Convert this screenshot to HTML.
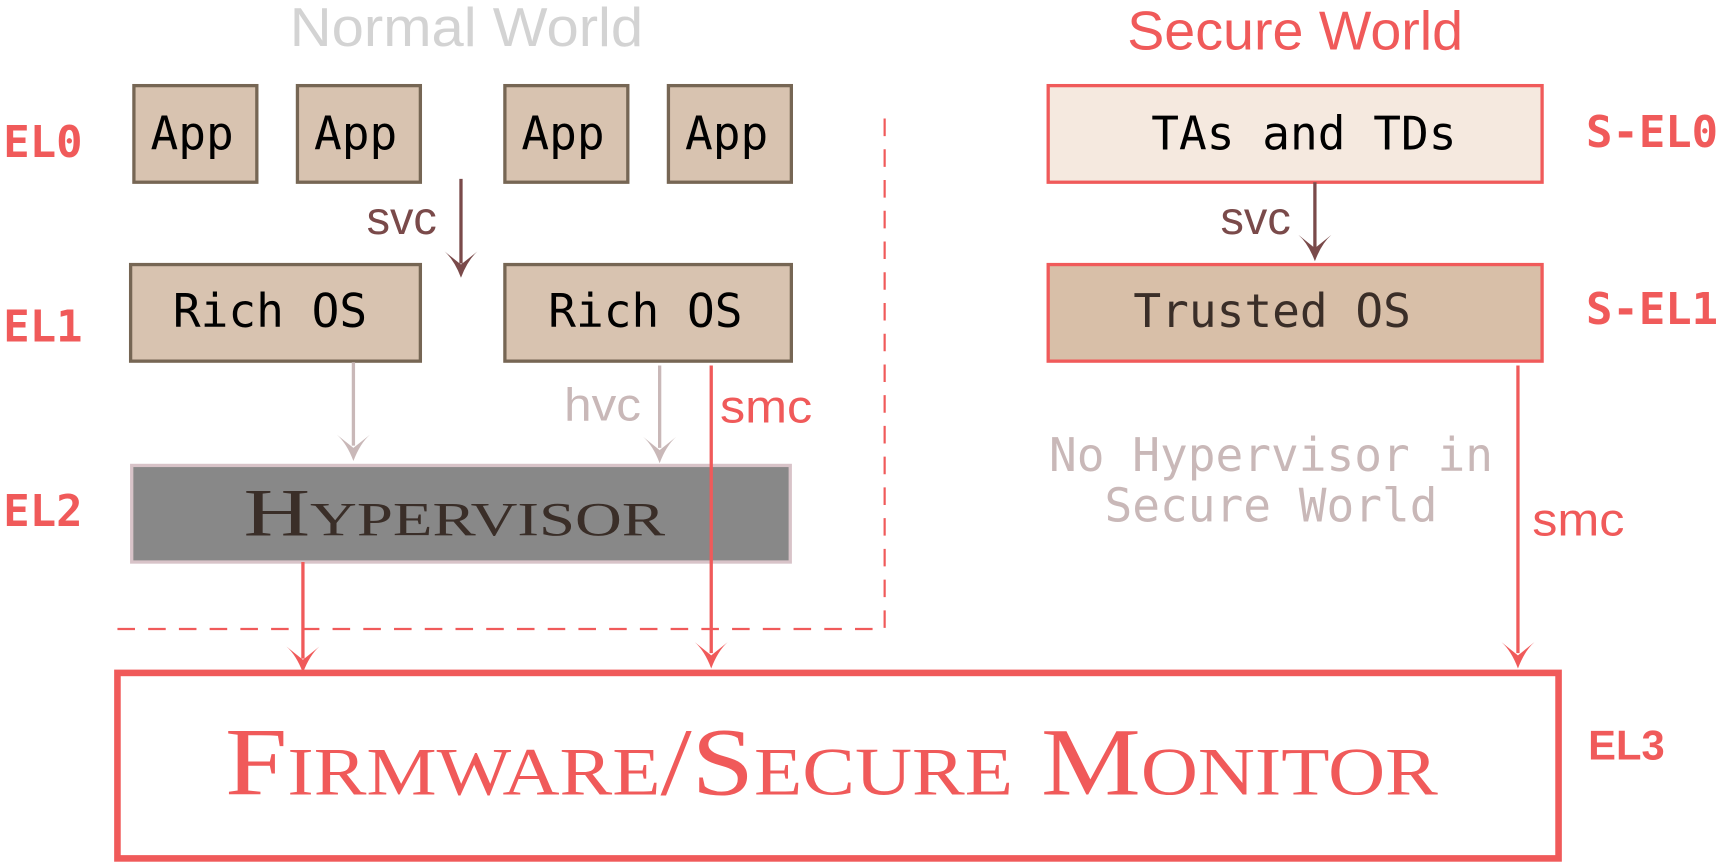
<!DOCTYPE html>
<html><head><style>html,body{margin:0;padding:0;background:#fff;}svg{display:block}</style></head>
<body>
<svg width="1721" height="865" viewBox="0 0 1568 788" preserveAspectRatio="none" xmlns="http://www.w3.org/2000/svg">
<defs>
<path id="ah" d="M-15 -24 Q-6 -16 0 0 Q6 -16 15 -24 L0 -12 Z"/>
</defs>
<g font-family="Liberation Sans, sans-serif" font-size="50" text-anchor="middle">
<text x="425" y="42" fill="#d3d3d3" textLength="322" lengthAdjust="spacingAndGlyphs">Normal World</text>
<text x="1180" y="45" fill="#f05a5a" textLength="306" lengthAdjust="spacingAndGlyphs">Secure World</text>
</g>
<g font-family="DejaVu Sans Mono, Liberation Mono, monospace" font-weight="bold" font-size="40" fill="#f05a5a">
<text x="3" y="143">EL0</text>
<text x="3" y="311">EL1</text>
<text x="3" y="479">EL2</text>
<text x="1445" y="134">S-EL0</text>
<text x="1445" y="295">S-EL1</text>
</g>
<text x="1447" y="692" font-family="Liberation Sans, sans-serif" font-weight="bold" font-size="38" fill="#f05a5a">EL3</text>
<g fill="#d8c3b0" stroke="#766654" stroke-width="3">
<rect x="122" y="78" width="112" height="88"/><rect x="271" y="78" width="112" height="88"/>
<rect x="460" y="78" width="112" height="88"/><rect x="609" y="78" width="112" height="88"/>
<rect x="119" y="241" width="264" height="88"/><rect x="460" y="241" width="261" height="88"/>
</g>
<g font-family="DejaVu Sans Mono, monospace" font-size="42" fill="#000" text-anchor="middle">
<text x="175" y="136">App</text><text x="324" y="136">App</text><text x="513" y="136">App</text><text x="662" y="136">App</text>
<text x="246" y="298">Rich OS</text><text x="588" y="298">Rich OS</text>
</g>
<rect x="955" y="78" width="450" height="88" fill="#f5e9df" stroke="#f05a5a" stroke-width="3"/>
<text x="1188" y="136" font-family="DejaVu Sans Mono, monospace" font-size="42" text-anchor="middle">TAs and TDs</text>
<rect x="955" y="241" width="450" height="88" fill="#d8bfa8" stroke="#f05a5a" stroke-width="3"/>
<text x="1159" y="298" font-family="DejaVu Sans Mono, monospace" font-size="42" text-anchor="middle" fill="#3a2e28">Trusted OS</text>
<rect x="120" y="424" width="600" height="88" fill="#888" stroke="#d8c3c8" stroke-width="3"/>
<text x="222" y="488" font-family="Liberation Serif, serif" font-size="62" font-variant="small-caps" fill="#3a2e28" textLength="384" lengthAdjust="spacingAndGlyphs">Hypervisor</text>
<rect x="107" y="613" width="1313" height="169" fill="#fff" stroke="#f05a5a" stroke-width="6"/>
<text x="205" y="724" font-family="Liberation Serif, serif" font-size="88" font-variant="small-caps" fill="#f05a5a" textLength="1105" lengthAdjust="spacingAndGlyphs">Firmware/Secure Monitor</text>
<path d="M806 108 V573 H97" fill="none" stroke="#f05a5a" stroke-width="2" stroke-dasharray="16 12"/>
<g fill="none" stroke-width="3">
<path d="M420 163 V240" stroke="#7a4a4a"/>
<path d="M1198 166 V226" stroke="#7a4a4a"/>
<path d="M322 330 V406" stroke="#c9b8b8"/>
<path d="M601 333 V408" stroke="#c9b8b8"/>
<path d="M648 333 V595" stroke="#f05a5a"/>
<path d="M276 512 V600" stroke="#f05a5a"/>
<path d="M1383 333 V595" stroke="#f05a5a"/>
</g>
<use href="#ah" x="420" y="253" fill="#7a4a4a"/>
<use href="#ah" x="1198" y="238" fill="#7a4a4a"/>
<use href="#ah" x="322" y="420" fill="#c9b8b8"/>
<use href="#ah" x="601" y="422" fill="#c9b8b8"/>
<use href="#ah" x="648" y="609" fill="#f05a5a"/>
<use href="#ah" x="276" y="613" fill="#f05a5a"/>
<use href="#ah" x="1383" y="609" fill="#f05a5a"/>
<g font-family="Liberation Sans, sans-serif" font-size="42">
<text x="334" y="213" fill="#7a4a4a" textLength="64" lengthAdjust="spacingAndGlyphs">svc</text>
<text x="1112" y="213" fill="#7a4a4a" textLength="64" lengthAdjust="spacingAndGlyphs">svc</text>
<text x="514" y="383" fill="#c9b8b8" textLength="70" lengthAdjust="spacingAndGlyphs">hvc</text>
<text x="656" y="385" fill="#f05a5a" textLength="84" lengthAdjust="spacingAndGlyphs">smc</text>
<text x="1396" y="488" fill="#f05a5a" textLength="84" lengthAdjust="spacingAndGlyphs">smc</text>
</g>
<g font-family="DejaVu Sans Mono, monospace" font-size="42" fill="#c9b8b8" text-anchor="middle">
<text x="1158" y="429">No Hypervisor in</text>
<text x="1158" y="475">Secure World</text>
</g>
</svg>
</body></html>
